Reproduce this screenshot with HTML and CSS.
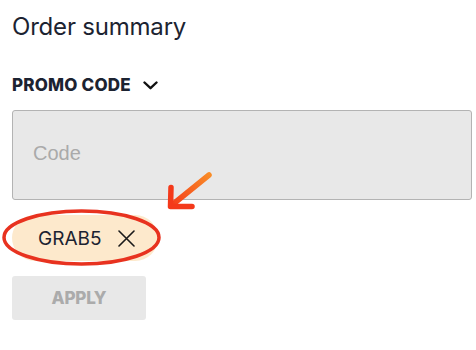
FILE: index.html
```html
<!DOCTYPE html>
<html lang="en">
<head>
    <meta charset="UTF-8">
    <meta name="viewport" content="width=device-width, initial-scale=1.0">
    <title>Order summary</title>
    <link rel="stylesheet" href="styles.css">
</head>
<body>
    <main class="summary">
        <h2 class="summary-title">Order summary</h2>

        <button class="promo-toggle">
            PROMO CODE
            <svg class="chevron" width="15" height="9" viewBox="0 0 15 9">
                <path d="M1.5 1.5 L7.5 7.2 L13.5 1.5" fill="none" stroke="#111" stroke-width="2.4" stroke-linecap="round" stroke-linejoin="round"/>
            </svg>
        </button>

        <input class="code-input" type="text" placeholder="Code">

        <div class="chips">
            <span class="chip">
                GRAB5
                <svg class="chip-close" width="17" height="17" viewBox="0 0 17 17">
                    <path d="M1 1 L16 16 M16 1 L1 16" stroke="#1a1a1a" stroke-width="1.6" stroke-linecap="round"/>
                </svg>
            </span>
        </div>

        <button class="apply-btn" disabled>APPLY</button>
    </main>

    <!-- marcas de anotación sobre la captura -->
    <svg class="annotation" width="476" height="350" viewBox="0 0 476 350">
        <defs>
            <linearGradient id="arrowGrad" x1="210" y1="174" x2="170" y2="208" gradientUnits="userSpaceOnUse">
                <stop offset="0" stop-color="#f98c27"/>
                <stop offset="1" stop-color="#f4381a"/>
            </linearGradient>
        </defs>
        <ellipse cx="81.5" cy="237.5" rx="77.5" ry="26.5" fill="none" stroke="#e8321f" stroke-width="3.5"/>
        <path d="M209 175 L172 205" stroke="url(#arrowGrad)" stroke-width="5.5" stroke-linecap="round"/>
        <path d="M171 187.5 L170.5 206.5 L192 206.5" fill="none" stroke="#f4391a" stroke-width="5.5" stroke-linecap="round" stroke-linejoin="round"/>
    </svg>
</body>
</html>
```

FILE: styles.css
```css
* {
    box-sizing: border-box;
    margin: 0;
    padding: 0;
}
body {
    font-family: Inter, "Noto Sans", sans-serif;
    background-color: #fff;
    color: #1c2331;
    position: relative;
    width: 476px;
    height: 350px;
    overflow: hidden;
}
.summary {
    padding: 12px 5px 0 12px;
    display: flex;
    flex-direction: column;
    align-items: flex-start;
}
.summary-title {
    font-size: 24px;
    font-weight: 400;
    line-height: 30px;
    letter-spacing: -0.2px;
}
.promo-toggle {
    margin-top: 33px;
    background: none;
    border: none;
    font-family: Inter, sans-serif;
    font-size: 17px;
    font-weight: 800;
    letter-spacing: 0.2px;
    color: #1c2331;
    display: flex;
    align-items: center;
    gap: 12px;
    line-height: 20px;
    cursor: pointer;
}
.chevron {
    display: block;
}
.code-input {
    margin-top: 15px;
    width: 460px;
    height: 90px;
    background-color: #e8e8e8;
    border: 1px solid #b3b3b3;
    border-radius: 3px;
    padding: 0 20px 3px;
    font-family: "Liberation Sans", Arial, sans-serif;
    font-size: 20px;
    color: #333;
}
.code-input::placeholder {
    color: #aaaaaa;
}
.chips {
    margin-top: 15px;
}
.chip {
    display: flex;
    align-items: center;
    gap: 16px;
    height: 46px;
    padding: 0 22px 0 26px;
    background-color: #fde9cc;
    border-radius: 23px;
    font-size: 19px;
    color: #1c2331;
    width: 146px;
}
.chip-close {
    display: block;
}
.apply-btn {
    margin-top: 15px;
    width: 134px;
    height: 44px;
    background-color: #e8e8e8;
    border: none;
    border-radius: 3px;
    font-family: Inter, sans-serif;
    font-size: 17px;
    font-weight: 800;
    letter-spacing: -0.2px;
    color: #ababab;
}
.annotation {
    position: absolute;
    top: 0;
    left: 0;
    pointer-events: none;
}
```
